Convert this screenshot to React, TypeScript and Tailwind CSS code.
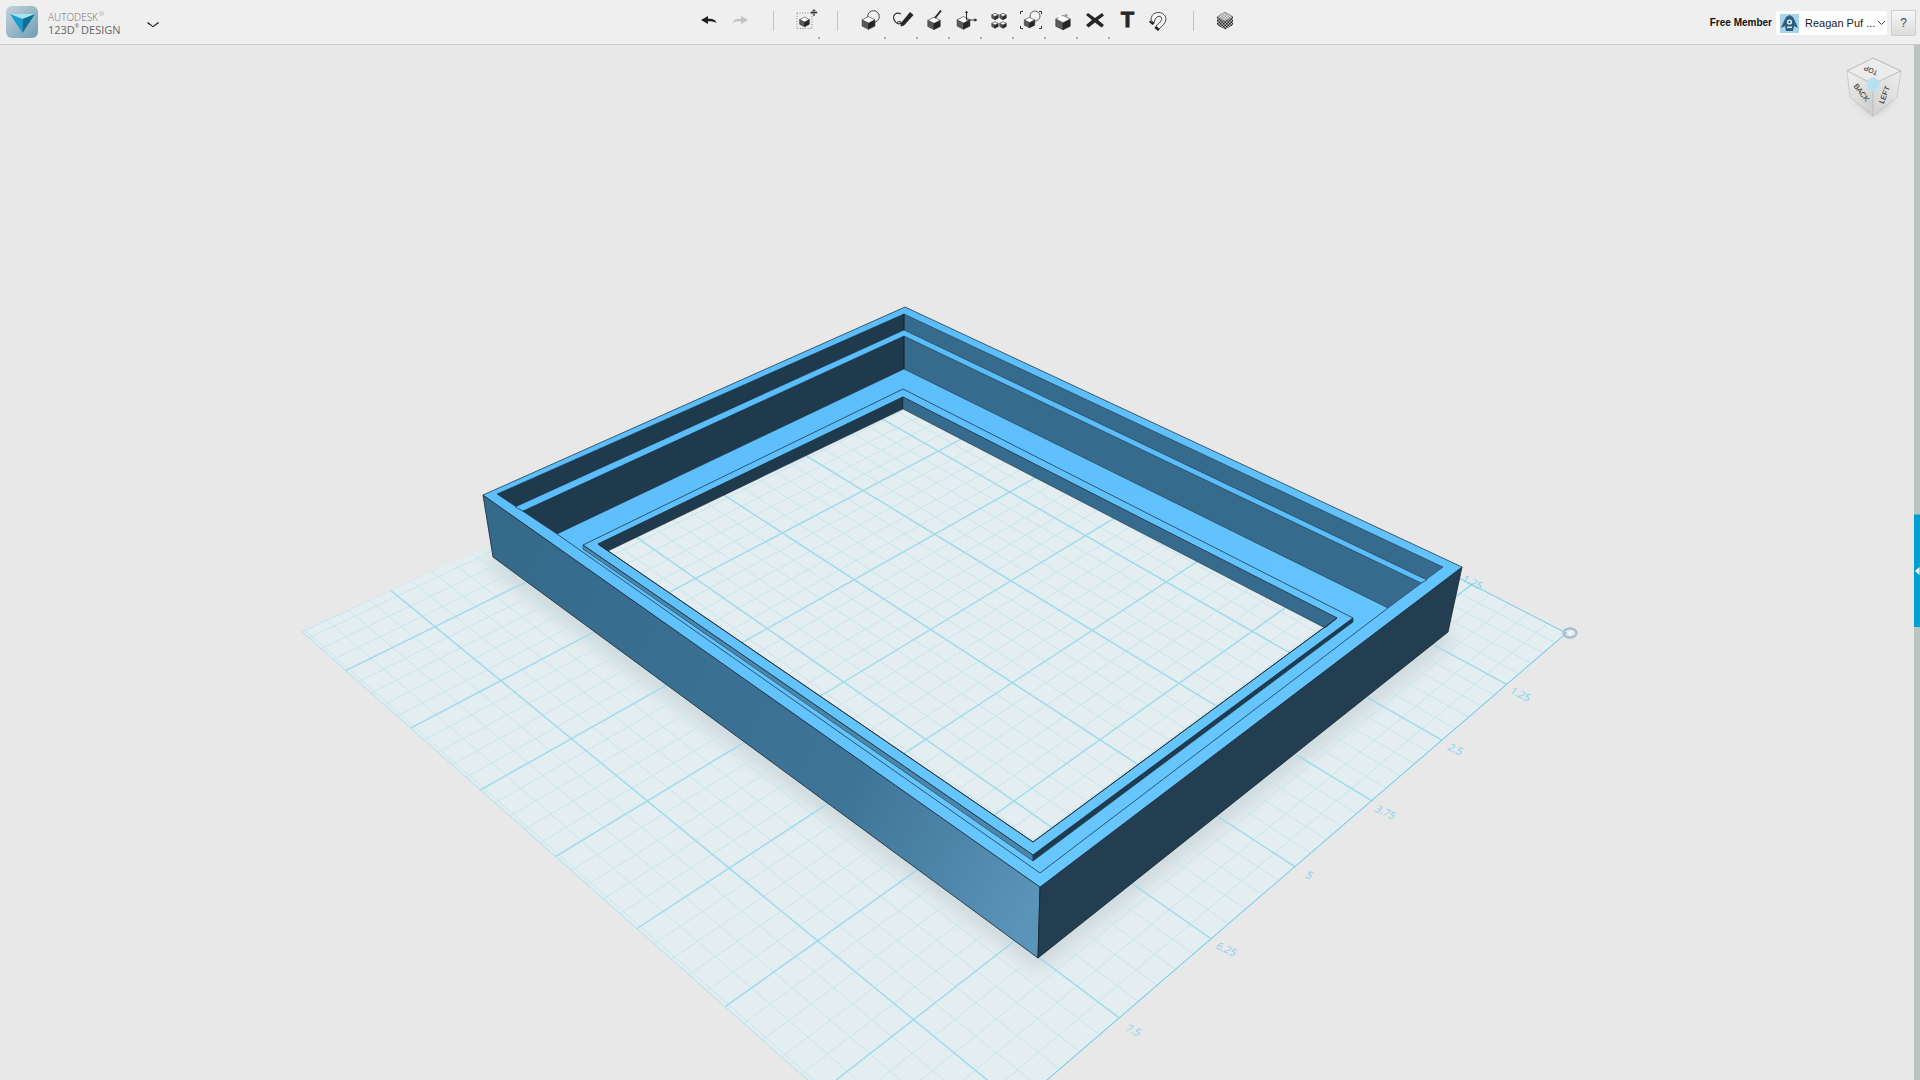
import React from "react";

const O = [1567, 633];
const P = (s: number, t: number): [number, number] => {
  const w = 1 - 0.0378 * s + 0.03254 * t;
  return [(O[0] - 116.9 * s - 47.1 * t) / w, (O[1] + 25.7 * s - 29.9 * t) / w];
};
const SMAX = 7.83;
const TMAX = 7.72;
const pts = (a: number[][]) => a.map((p) => p.join(",")).join(" ");

function Grid() {
  const lines: React.ReactNode[] = [];
  for (let phase = 0; phase < 2; phase++) {
    for (let i = 0; i * 0.2 <= SMAX; i++) {
      const major = i % 5 === 0;
      if (major !== (phase === 1)) continue;
      const a = P(i * 0.2, 0);
      const b = P(i * 0.2, TMAX);
      lines.push(<line key={`s${i}`} x1={a[0]} y1={a[1]} x2={b[0]} y2={b[1]} stroke={major ? "#9bdaef" : "#c6e6ef"} strokeWidth={major ? 1.4 : 1} />);
    }
    for (let i = 0; i * 0.2 <= TMAX; i++) {
      const major = i % 5 === 0;
      if (major !== (phase === 1)) continue;
      const a = P(0, i * 0.2);
      const b = P(SMAX, i * 0.2);
      lines.push(<line key={`t${i}`} x1={a[0]} y1={a[1]} x2={b[0]} y2={b[1]} stroke={major ? "#9bdaef" : "#c6e6ef"} strokeWidth={major ? 1.4 : 1} />);
    }
  }
  const O0 = P(0, 0), BB = P(SMAX, 0), AA = P(SMAX, TMAX);
  const T1 = P(0, TMAX);
  return (
    <g clipPath="url(#plateClip)">
      <polygon points={pts([O0, BB, AA, T1])} fill="#e4edef" />
      <path d="M493 557 L1038 958 L1448 632" fill="none" stroke="#7f8f96" strokeWidth="16" opacity="0.28" filter="url(#soft)" />
      {lines}
      <polyline points={pts([AA, T1])} fill="none" stroke="#a8deef" strokeWidth="1.4" />
      <polyline points={pts([AA, BB])} fill="none" stroke="#a8deef" strokeWidth="1.4" />
      <polyline points={pts([T1, O0, BB])} fill="none" stroke="#6fcdea" strokeWidth="1.6" />
    </g>
  );
}

const labels: [string, number, number][] = [
  ["1.25", 1472, 583],
  ["1.25", 1520, 695],
  ["2.5", 1455, 750],
  ["3.75", 1385, 813],
  ["5", 1309, 876],
  ["6.25", 1226, 950],
  ["7.5", 1133, 1031],
];

function Model() {
  return (
    <g strokeLinejoin="round">
      <polygon points="483,495 1040,887 1038,958 493,557" fill="url(#leftFace)" stroke="#16242e" strokeWidth="0.8" />
      <polygon points="1040,887 1462,567 1448,632 1038,958" fill="#233e50" stroke="#16242e" strokeWidth="0.8" />
      <path d="M905 307 L1462 567 L1040 887 L483 495 Z M903 397 L598 544 L1033 842 L1337 618 Z" fillRule="evenodd" fill="url(#topFace)" stroke="#16242e" strokeWidth="0.7" />
      <polygon points="904,314 497,494 557,534 904,369" fill="#203a4d" stroke="#16242e" strokeWidth="0.5" />
      <polygon points="904,314 1443,567 1388,608 904,369" fill="#376b8d" stroke="#16242e" strokeWidth="0.5" />
      <line x1="904" y1="314" x2="904" y2="369" stroke="#16242e" strokeWidth="0.8" />
      <polygon points="904,330 515,507 523,511 904,336 1421,583 1427,580" fill="#5cbdfc" stroke="#16242e" strokeWidth="0.5" />
      <polyline points="557,534 1040,873 1388,608" fill="none" stroke="#1c3a4e" strokeWidth="0.8" />
      <polygon points="583,545 1033,855 1033,861 583,549" fill="#4c86a9" stroke="#1c3a4e" strokeWidth="0.6" />
      <polygon points="1033,855 1353,618 1353,622 1033,861" fill="#1f3b4e" stroke="#1c3a4e" strokeWidth="0.6" />
      <polygon points="903,389 583,545 1033,855 1353,618" fill="none" stroke="#1c3a4e" strokeWidth="0.8" />
      <polygon points="903,397 598,544 608,551 903,409" fill="#203a4d" stroke="#16242e" strokeWidth="0.5" />
      <polygon points="903,397 1337,618 1325,628 903,409" fill="#376b8d" stroke="#16242e" strokeWidth="0.5" />
      <line x1="598" y1="544" x2="1033" y2="842" stroke="#16242e" strokeWidth="0.8" />
      <line x1="1033" y1="842" x2="1337" y2="618" stroke="#16242e" strokeWidth="0.8" />
    </g>
  );
}

function Scene() {
  const p = pts([P(SMAX, TMAX), [484, 547], [905, 350], [1460, 578], [1567, 633], P(SMAX, 0)]);
  return (
    <svg className="absolute inset-0 h-[1035px] w-[1914px]" viewBox="0 45 1914 1035">
      <defs>
        <clipPath id="plateClip"><polygon points={p} /></clipPath>
        <filter id="soft" x="-20%" y="-20%" width="140%" height="140%"><feGaussianBlur stdDeviation="9" /></filter>
        <linearGradient id="leftFace" gradientUnits="userSpaceOnUse" x1="483" y1="600" x2="1040" y2="900">
          <stop offset="0" stopColor="#356a8b" />
          <stop offset="0.65" stopColor="#3e7498" />
          <stop offset="1" stopColor="#5a94b8" />
        </linearGradient>
        <linearGradient id="topFace" gradientUnits="userSpaceOnUse" x1="900" y1="300" x2="1040" y2="890">
          <stop offset="0" stopColor="#5cbdfc" />
          <stop offset="1" stopColor="#68c7ff" />
        </linearGradient>
      </defs>
      <Grid />
      {labels.map(([l, x, y], i) => (
        <text key={i} x={0} y={0} textAnchor="middle" dominantBaseline="middle" fontSize="10.5" fontFamily="'Open Sans', sans-serif" fill="#7dd0ea" transform={`translate(${x} ${y}) rotate(25) skewX(-12)`}>{l}</text>
      ))}
      <ellipse cx="1570" cy="633" rx="6.5" ry="4.5" fill="none" stroke="#a8bfd0" strokeWidth="2.4" />
      <polygon points="1567,633 1573,630 1571,636" fill="#eef3f5" />
      <Model />
    </svg>
  );
}

function ViewCube() {
  return (
    <svg className="absolute right-[5px] top-[8px] h-[72px] w-[64px]" viewBox="1845 53 64 72">
      <defs>
        <linearGradient id="cubeL" x1="0" y1="0" x2="0.6" y2="1">
          <stop offset="0" stopColor="#f2f2f2" />
          <stop offset="1" stopColor="#cfcfcf" />
        </linearGradient>
        <linearGradient id="cubeR" x1="1" y1="0" x2="0.3" y2="1">
          <stop offset="0" stopColor="#eeeeee" />
          <stop offset="1" stopColor="#d4d4d4" />
        </linearGradient>
        <filter id="cubeShadow" x="-30%" y="-30%" width="160%" height="160%"><feGaussianBlur stdDeviation="3" /></filter>
      </defs>
      <polygon points="1853,100 1873,117 1895,100" fill="#a8a8a8" opacity="0.5" filter="url(#cubeShadow)" />
      <polygon points="1873,58 1901,71 1873,84 1847,71" fill="#ececec" stroke="#ababab" strokeWidth="0.8" />
      <polygon points="1847,71 1873,84 1873,116 1850,97" fill="url(#cubeL)" stroke="#b8b8b8" strokeWidth="0.6" />
      <polygon points="1901,71 1873,84 1873,116 1897,97" fill="url(#cubeR)" stroke="#b8b8b8" strokeWidth="0.6" />
      <polygon points="1868,80 1873,77 1880,81 1879,88 1873,92 1868,88" fill="#b6e0f1" />
      <g fontFamily="'Liberation Sans', sans-serif" fontSize="7" fill="#222" textAnchor="middle" dominantBaseline="middle">
        <text x="1871" y="70" transform="rotate(205 1871 70)">TOP</text>
        <text x="1861" y="93" fontSize="7.5" transform="rotate(52 1861 93)">BACK</text>
        <text x="1885" y="95" fontSize="7.5" transform="rotate(-68 1885 95)">LEFT</text>
      </g>
    </svg>
  );
}

function Cube({ x, y, s, top = "#ffffff" }: { x: number; y: number; s: number; top?: string }) {
  return (
    <g strokeLinejoin="round">
      <polygon points={pts([[x, y + s * 0.3], [x - s, y - s * 0.2], [x - s, y + s * 0.8], [x, y + s * 1.3]])} fill="#5a5a5a" stroke="#333" strokeWidth="0.6" />
      <polygon points={pts([[x, y + s * 0.3], [x + s, y - s * 0.2], [x + s, y + s * 0.8], [x, y + s * 1.3]])} fill="#252525" stroke="#222" strokeWidth="0.6" />
      <polygon points={pts([[x, y - s * 0.7], [x + s, y - s * 0.2], [x, y + s * 0.3], [x - s, y - s * 0.2]])} fill={top} stroke="#333" strokeWidth="0.6" />
    </g>
  );
}

const Icon = ({ children }: { children: React.ReactNode }) => (
  <svg width="28" height="24" viewBox="0 0 28 24" className="block">{children}</svg>
);

const icons: Record<string, React.ReactNode> = {
  undo: <path d="M6 12 L13 8 V10.8 C17.5 10.6 20.5 11.5 21.5 15 C19.5 13.6 17 13.2 13 13.3 V16 Z" fill="#1f1f1f" />,
  redo: <path d="M22 12 L15 8 V10.8 C10.5 10.6 7.5 11.5 6.5 15 C8.5 13.6 11 13.2 15 13.3 V16 Z" fill="#c2c2c2" />,
  prim: (
    <>
      <rect x="6" y="5" width="15" height="15.5" fill="none" stroke="#777" strokeWidth="0.9" strokeDasharray="1 1.6" />
      <Cube x={13.5} y={12.5} s={4.8} />
      <path d="M23 1.5 V8 M20 4.5 H26" stroke="#333" strokeWidth="1.2" />
      <path d="M21.5 3 L23 1.5 L24.5 3 M24.5 3 L26 4.5 L24.5 6 M21.5 6 L20 4.5 L21.5 3" fill="none" stroke="#333" strokeWidth="0.7" />
    </>
  ),
  bool: (
    <>
      <circle cx="16.5" cy="8.5" r="5.8" fill="#f3f3f3" stroke="#444" strokeWidth="1" />
      <Cube x={11.5} y={13} s={6.4} />
    </>
  ),
  sketch: (
    <>
      <path d="M12 6 C7 3.5 3.5 7 5 11.5 C6.5 15.5 10 17 12 15 C12.5 13 9 13 8 15" fill="none" stroke="#333" strokeWidth="1.2" />
      <path d="M12 15 L21 4 L24.5 7 L15 17.5 L11.5 18.5 Z" fill="#262626" />
    </>
  ),
  construct: (
    <>
      <Cube x={13} y={13.5} s={6.2} />
      <path d="M14 10 L20 2.5" stroke="#2a2a2a" strokeWidth="2" />
    </>
  ),
  modify: (
    <>
      <Cube x={10.5} y={13} s={6.4} />
      <path d="M13.5 12 V4 M13.5 12 H23" stroke="#333" strokeWidth="1.1" />
      <path d="M12 5 L13.5 2.5 L15 5 Z M21.5 10.2 L24.5 12 L21.5 13.8 Z" fill="#222" />
    </>
  ),
  pattern: (
    <>
      <Cube x={10} y={7.5} s={3.2} />
      <Cube x={18} y={7.5} s={3.2} />
      <Cube x={10} y={16} s={3.2} />
      <Cube x={18} y={16} s={3.2} />
    </>
  ),
  group: (
    <>
      <circle cx="18" cy="8" r="5" fill="#f3f3f3" stroke="#555" strokeWidth="0.9" />
      <Cube x={12.5} y={13} s={5.2} />
      <path d="M3.5 6 V3.5 H6 M22 3.5 H24.5 V6 M3.5 18 V20.5 H6 M22 20.5 H24.5 V18" fill="none" stroke="#333" strokeWidth="1" />
    </>
  ),
  combine: (
    <>
      <Cube x={14} y={12.5} s={7.2} />
      <circle cx="11" cy="8.5" r="1.5" fill="#fff" />
      <circle cx="17" cy="7.5" r="1.5" fill="#999" />
    </>
  ),
  measure: <path d="M7 5 L14 10 L21 5 L23 7.5 L17 12 L23 17 L20.5 19.5 L14 14.5 L7.5 19.5 L5 17 L11 12 L5 7 Z" fill="#262626" />,
  magnet: (
    <>
      <path d="M9 15 L6 12 C6 5 13 3 17.5 5.5 C23 9 22 14.5 14 21 L11 18 C16 14 18 11 16 9 C13.5 7 10 9 9 15 Z" fill="#f7f7f7" stroke="#444" strokeWidth="1" />
      <path d="M5 12.5 L9.5 15.5 L7.5 17 L4 14 Z M11 18 L14.5 21.5 L13 23 L9.5 20 Z" fill="#222" />
    </>
  ),
  material: (
    <>
      <defs>
        <pattern id="chk" width="3" height="3" patternUnits="userSpaceOnUse">
          <rect width="3" height="3" fill="#bdbdbd" />
          <rect width="1.5" height="1.5" fill="#222" />
          <rect x="1.5" y="1.5" width="1.5" height="1.5" fill="#222" />
        </pattern>
        <pattern id="chkTop" width="3" height="3" patternUnits="userSpaceOnUse">
          <rect width="3" height="3" fill="#e8e8e8" />
          <rect width="1.5" height="1.5" fill="#999" />
          <rect x="1.5" y="1.5" width="1.5" height="1.5" fill="#999" />
        </pattern>
      </defs>
      <polygon points="14,13 6,8.8 6,17 14,21.5 22,17 22,8.8" fill="url(#chk)" />
      <polygon points="14,4 22,8.8 14,13 6,8.8" fill="url(#chkTop)" stroke="#555" strokeWidth="0.5" />
    </>
  ),
};

function Tool({ name, mark, className = "w-8" }: { name: string; mark?: boolean; className?: string }) {
  return (
    <div className={`relative flex h-10 items-center justify-center ${className}`}>
      {name === "text" ? (
        <span className="ml-px font-['Liberation_Sans',sans-serif] text-[22px] font-bold leading-none text-[#262626] [-webkit-text-stroke:0.8px_#262626]">T</span>
      ) : (
        <Icon>{icons[name]}</Icon>
      )}
      {mark && <span className="absolute left-[29px] top-[37px] h-[2px] w-[2px] bg-[#a8a8a8]" />}
    </div>
  );
}

const Sep = ({ className }: { className: string }) => <div className={`mt-[11px] h-[20px] w-px bg-[#c4c4c4] ${className}`} />;

function Logo() {
  return (
    <svg width="32" height="32" viewBox="0 0 32 32" className="block">
      <defs>
        <linearGradient id="lg" x1="0" y1="0" x2="1" y2="1">
          <stop offset="0" stopColor="#c3d3da" />
          <stop offset="1" stopColor="#6f9db3" />
        </linearGradient>
      </defs>
      <rect width="32" height="32" rx="6" fill="url(#lg)" />
      <polygon points="4,8 29,8 16.5,13" fill="#a5e3f3" />
      <polygon points="4,8 16.5,13 16.5,27" fill="#169dd0" />
      <polygon points="29,8 16.5,13 16.5,27" fill="#0d6f95" />
    </svg>
  );
}

function Avatar() {
  return (
    <svg width="19" height="19" viewBox="0 0 19 19" className="block shrink-0">
      <rect width="19" height="19" fill="#a9d3e6" />
      <path d="M6 3 L9.5 1 L13 3 L15 7 L18 14 L14 12 L13 17 L6 17 L5 12 L1 14 L4 7 Z" fill="#2c5f7d" />
      <circle cx="9.5" cy="8" r="2.6" fill="#e4f2f7" />
      <circle cx="9.5" cy="8" r="1.1" fill="#14394f" />
      <rect x="7" y="12.5" width="5" height="1.6" fill="#cfe6ef" />
    </svg>
  );
}

export default function App() {
  return (
    <div className="flex h-screen w-screen flex-col overflow-hidden bg-[#e8e8e8]">
      <header className="flex h-[45px] shrink-0 items-start border-b border-[#c9c9c9] bg-[#efefef]">
        <div className="flex h-full w-[693px] shrink-0 items-start pl-[6px] pt-[6px]">
          <Logo />
          <div className="ml-[10px] mt-[5px] w-[90px] font-['Open_Sans',sans-serif]">
            <div className="flex text-[10px] font-light leading-[12px] text-[#6f6f6f]">AUTODESK<span className="ml-px mt-[-3px] text-[6px]">®</span></div>
            <div className="flex text-[11px] font-medium leading-[13px] text-[#666]">123D<span className="mt-[-3px] text-[5px]">®</span><span className="ml-[2px]">DESIGN</span></div>
          </div>
          <svg width="14" height="8" viewBox="0 0 14 8" className="ml-[8px] mt-[15px]">
            <path d="M1.5 1.5 Q7 5.5 7 6 Q7 5.5 12.5 1.5" fill="none" stroke="#222" strokeWidth="1.5" />
          </svg>
        </div>
        <Tool name="undo" className="w-[31px]" />
        <Tool name="redo" className="w-8" />
        <Sep className="ml-[17px]" />
        <Tool name="prim" mark className="ml-[15px] w-8" />
        <Sep className="ml-[16px]" />
        <div className="ml-[17px] flex">
          <Tool name="bool" mark />
          <Tool name="sketch" mark />
          <Tool name="construct" mark />
          <Tool name="modify" mark />
          <Tool name="pattern" mark />
          <Tool name="group" mark />
          <Tool name="combine" mark />
          <Tool name="measure" mark />
          <Tool name="text" />
          <Tool name="magnet" />
        </div>
        <Sep className="ml-[18px]" />
        <Tool name="material" className="ml-[15px] w-8" />
        <div className="ml-auto mr-[4px] flex h-full items-start pt-[10px]">
          <span className="mt-[6px] whitespace-nowrap font-['Liberation_Sans',sans-serif] text-[10px] font-bold leading-[14px] text-[#111]">Free Member</span>
          <div className="ml-[4px] mt-px flex h-[24px] w-[111px] items-center rounded-[2px] bg-white pl-[4px]">
            <Avatar />
            <span className="ml-[6px] whitespace-nowrap font-['Liberation_Sans',sans-serif] text-[11px] leading-none text-[#222]">Reagan Puf ...</span>
            <svg width="9" height="6" viewBox="0 0 9 6" className="ml-[2px] shrink-0">
              <path d="M1 1 L4.5 4.5 L8 1" fill="none" stroke="#444" strokeWidth="1" />
            </svg>
          </div>
          <div className="ml-[4px] flex h-[26px] w-[25px] items-center justify-center rounded-[1px] border border-[#cfcfcf] bg-gradient-to-b from-[#f7f7f7] to-[#dcdcdc] font-['Liberation_Sans',sans-serif] text-[12px] text-[#444]">?</div>
        </div>
      </header>
      <main className="flex flex-1">
        <div className="relative flex-1 overflow-hidden">
          <Scene />
          <ViewCube />
        </div>
        <div className="flex w-[6px] flex-col bg-[#bcc5c3]">
          <div className="mt-[469px] flex h-[113px] items-center justify-center border-t border-[#4bb3d5] bg-[#00a0d2]">
            <svg width="5" height="8" viewBox="0 0 5 8"><polygon points="0,4 4.5,0 4.5,8" fill="#ffffff" /></svg>
          </div>
        </div>
      </main>
    </div>
  );
}
